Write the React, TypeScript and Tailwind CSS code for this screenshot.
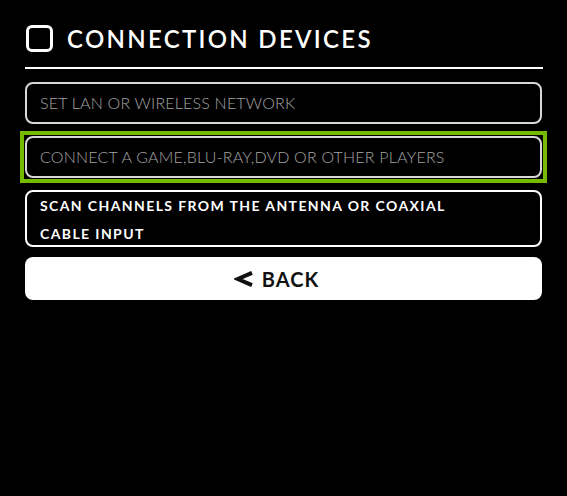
import React from 'react';

const font = { fontFamily: 'Lato, "Open Sans", sans-serif' };

export default function App() {
  return (
    <div className="w-[567px] h-[496px] bg-black px-[25px] pt-[25px]" style={font}>
      {/* header */}
      <div className="flex items-center gap-[14px] pl-px">
        <div className="w-[27px] h-[27px] rounded-[6px] border-[3px] border-white" />
        <h1 className="text-[24px] leading-[27px] font-semibold text-white tracking-[2.3px]">CONNECTION DEVICES</h1>
      </div>
      <div className="mt-[15px] h-[2px] w-[518px] bg-white" />

      <div className="mt-[13px] flex flex-col">
        <button className="h-[42px] rounded-[8px] border-2 border-[#d8d8d8] px-[13px] text-left text-[16px] font-light tracking-[0.2px] text-[#a4a4a4]">
          SET LAN OR WIRELESS NETWORK
        </button>

        <div className="mt-[7px] -mx-[5px] border-4 border-[#76b900] p-px">
          <button className="w-full h-[42px] rounded-[8px] border-2 border-[#d8d8d8] px-[13px] text-left text-[16px] font-light tracking-[0.2px] text-[#a4a4a4]">
            CONNECT A GAME,BLU-RAY,DVD OR OTHER PLAYERS
          </button>
        </div>

        <button className="mt-[7px] h-[57px] rounded-[8px] border-2 border-white px-[13px] flex flex-col items-start justify-start text-left text-[14px] leading-[28px] font-bold tracking-[1.4px] text-white">
          <span>SCAN CHANNELS FROM THE ANTENNA OR COAXIAL</span>
          <span>CABLE INPUT</span>
        </button>

        <button className="mt-[10px] h-[43px] rounded-[8px] bg-white pr-[14px] flex items-center justify-center gap-[9px] text-[20px] font-bold tracking-[1px] text-[#111]">
          <svg width="19" height="16" viewBox="0 0 19 16">
            <path d="M18 1.8 L3.8 8 L18 14.2" fill="none" stroke="#111" strokeWidth="4" strokeLinejoin="miter" />
          </svg>
          <span>BACK</span>
        </button>
      </div>
    </div>
  );
}
